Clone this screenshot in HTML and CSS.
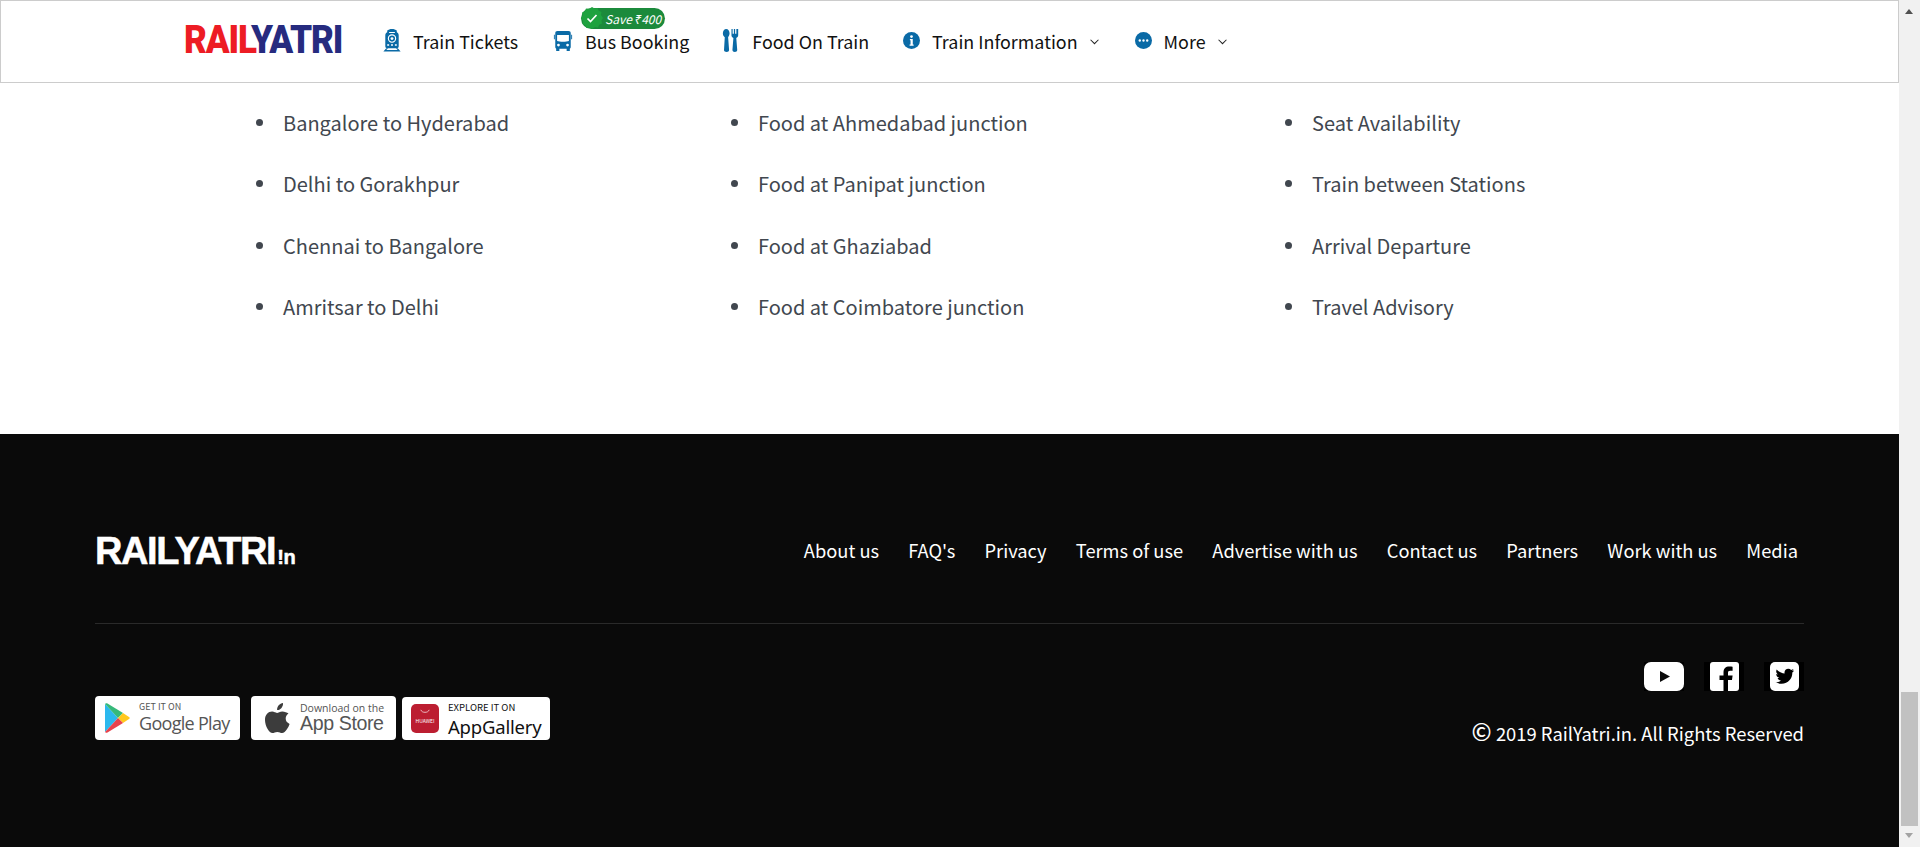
FILE: index.html
```html
<!DOCTYPE html>
<html>
<head>
<meta charset="UTF-8">
<title>RailYatri</title>
<link rel="stylesheet" href="styles.css">
</head>
<body>
<div class="page">
	<div class="content">
		<header class="topbar">
			<div class="brand"><div class="brand-text"><span class="rail">RAIL</span><span class="yatri">YATRI</span></div></div>
			<nav class="nav">
				<a class="nav-item item-train">
					<svg class="ic ic-train" viewBox="0 0 18 24"><path fill="#0a6aa6" d="M9 0c-2 0-4 .6-5 1.600v1.900C2.600 4 2 5.400 2 7v11c0 1.200.8 2 2 2h10c1.200 0 2-.8 2-2V7c0-1.600-.6-3-2-3.500V1.600C13 .6 11 0 9 0z"/><circle cx="9" cy="10" r="3.800" fill="none" stroke="#fff" stroke-width="1.200"/><circle cx="9" cy="10" r="1.500" fill="#fff"/><path fill="#fff" d="M6 3h6v1.200H6zM4 16h2v1.500H4zM8 16h2v1.500H8zM12 16h2v1.500h-2z"/><path fill="#0a6aa6" d="M0 23.500L3 20h2l-2 2h12l-2-2h2l3 3.500z"/></svg>
					Train Tickets
				</a>
				<a class="nav-item item-bus">
					<span class="save"><svg class="save-star" viewBox="0 0 22 22"><path fill="#1ea23f" d="M11 0l2.500 1.600L16.500 1l1.200 2.800 2.800 1.200-.6 3L22 11l-1.600 2.500.6 3-2.800 1.200-1.200 2.800-3-.6L11 22l-2.500-1.600-3 .6-1.200-2.800L1.500 17l.6-3L0 11l1.600-2.500-.6-3 2.800-1.200L5 1.500l3 .6z"/><path fill="none" stroke="#fff" stroke-width="1.700" d="M6.500 11.500l3 3 6-6.500"/></svg><i>Save ₹400</i></span>
					<svg class="ic ic-bus" viewBox="0 0 20 22"><path fill="#0a6aa6" d="M4 0h12c1.700 0 2.500 1 2.500 2.500V18c0 .8-.4 1.200-1 1.400V22h-3.500v-2.500H6V22H2.500v-2.600c-.6-.2-1-.6-1-1.400V2.500C1.500 1 2.300 0 4 0z"/><path fill="#fff" d="M3.500 4.500h13V11c-3 1-10 1-13 0z"/><circle cx="5" cy="15.500" r="1.500" fill="#fff"/><circle cx="15" cy="15.500" r="1.500" fill="#fff"/><path fill="#0a6aa6" d="M0 4h1v5H0zM19 4h1v5h-1z"/></svg>
					Bus Booking
				</a>
				<a class="nav-item item-food">
					<svg class="ic ic-food" viewBox="0 0 17 24"><path fill="#0a6aa6" d="M3.500 0C5.500 0 7 2 7 4.500 7 6.500 6 8 5.500 8.500L6.500 22c0 1.200-1 2-2.500 2S1 23.200 1.200 22L2 8.500C.9 8 0 6.500 0 4.500 0 2 1.500 0 3.500 0z"/><path fill="#0a6aa6" d="M9 0h1.200v5h1.300V0h1.300v5h1.300V0H16v6.500c0 1.500-1 2.500-2 2.800L15 22c0 1.200-1 2-2.500 2S10 23.200 10 22l1-12.700c-1.100-.3-2-1.300-2-2.800z"/></svg>
					Food On Train
				</a>
				<a class="nav-item item-info">
					<svg class="ic ic-round" viewBox="0 0 16 16"><circle cx="8" cy="8" r="8" fill="#0a6aa6"/><circle cx="8" cy="4.300" r="1.300" fill="#fff"/><path fill="#fff" d="M6.500 6.500h2.700v5.200h.8V13H6.200v-1.300h.9V7.800h-.6z"/></svg>
					Train Information
					<svg class="chev" viewBox="0 0 8 5"><path fill="none" stroke="#222" stroke-width=".9" d="M.5 .5L4 4l3.500-3.500"/></svg>
				</a>
				<a class="nav-item item-more">
					<svg class="ic ic-round" viewBox="0 0 16 16"><circle cx="8" cy="8" r="8" fill="#0a6aa6"/><circle cx="4.500" cy="8" r="1.100" fill="#fff"/><circle cx="8" cy="8" r="1.100" fill="#fff"/><circle cx="11.500" cy="8" r="1.100" fill="#fff"/></svg>
					More
					<svg class="chev" viewBox="0 0 8 5"><path fill="none" stroke="#222" stroke-width=".9" d="M.5 .5L4 4l3.500-3.500"/></svg>
				</a>
			</nav>
		</header>

		<section class="links">
			<ul class="col col-1">
				<li>Bangalore to Hyderabad</li>
				<li>Delhi to Gorakhpur</li>
				<li>Chennai to Bangalore</li>
				<li>Amritsar to Delhi</li>
			</ul>
			<ul class="col col-2">
				<li>Food at Ahmedabad junction</li>
				<li>Food at Panipat junction</li>
				<li>Food at Ghaziabad</li>
				<li>Food at Coimbatore junction</li>
			</ul>
			<ul class="col col-3">
				<li>Seat Availability</li>
				<li>Train between Stations</li>
				<li>Arrival Departure</li>
				<li>Travel Advisory</li>
			</ul>
		</section>

		<footer class="footer">
			<div class="foot-top">
				<div class="foot-logo">RAILYATRI<span class="dot-in">!n</span></div>
				<div class="foot-links">
					<a>About us</a>
					<a>FAQ's</a>
					<a>Privacy</a>
					<a>Terms of use</a>
					<a>Advertise with us</a>
					<a>Contact us</a>
					<a>Partners</a>
					<a>Work with us</a>
					<a>Media</a>
				</div>
			</div>
			<div class="foot-bottom">
				<div class="stores">
					<a class="store store-play">
						<svg class="play-ic" viewBox="0 0 25 30"><path fill="#2bb8ee" d="M0 1v28l13-14z"/><path fill="#36b97a" d="M0 1c.5-.8 1.500-1 2.500-.4L18 10l-5 5z"/><path fill="#ffc81e" d="M18 10l6 4c1 .6 1 1.400 0 2l-6 4-5-5z"/><path fill="#e8434d" d="M0 29c.5.800 1.500 1 2.500.4L18 20l-5-5z"/></svg>
						<span class="store-text"><small>GET IT ON</small><b>Google Play</b></span>
					</a>
					<a class="store store-apple">
						<svg class="apple-ic" viewBox="0 0 26 31"><path fill="#3c3c3c" d="M18 0c.2 2-.5 3.600-1.500 4.900-1.100 1.300-2.700 2.300-4.400 2.100-.2-1.800.6-3.500 1.600-4.700C14.800 1 16.500.1 18 0zM23.500 10.600c-1.800 1.200-2.800 2.900-2.800 5 0 2.400 1.300 4.200 3.900 5.300-.6 1.900-1.500 3.700-2.700 5.400-1.500 2.300-3 3.700-4.800 3.700-1.700 0-2.600-1.100-4.800-1.100-2.100 0-3.200 1.100-4.800 1.100-1.900 0-3.300-1.600-4.900-4C1.100 23.200 0 20 0 16.900c0-5.100 3.300-8.300 7.100-8.300 2 0 3.600 1.300 4.900 1.300 1.200 0 3-1.400 5.300-1.400 2.400 0 4.700 1 6.200 2.100z"/></svg>
						<span class="store-text"><small>Download on the</small><b>App Store</b></span>
					</a>
					<a class="store store-huawei">
						<span class="huawei-ic"><svg viewBox="0 0 12 5"><path fill="none" stroke="#fff" stroke-width=".8" d="M1 .5c1 4 9 4 10 0"/></svg><em>HUAWEI</em></span>
						<span class="store-text"><small>EXPLORE IT ON</small><b>AppGallery</b></span>
					</a>
				</div>
				<div class="foot-right">
					<div class="social">
						<span class="soc"><svg class="yt" viewBox="0 0 40 29"><rect width="40" height="29" rx="7" fill="#fff"/><path fill="#0a0a0a" d="M16 9l10 5.500L16 20z"/></svg></span>
						<span class="soc"><svg viewBox="0 0 29 29"><rect width="29" height="29" rx="3" fill="#fff"/><path fill="#000" d="M18 29V18h4l.6-4.500H18v-2.600c0-1.300.4-2.100 2.200-2.100h2.400v-4c-.4 0-1.800-.2-3.400-.2-3.400 0-5.700 2-5.700 5.800v3.100h-4V18h4v11z"/></svg></span>
						<span class="soc"><svg viewBox="0 0 29 29"><rect width="29" height="29" rx="5" fill="#fff"/><path fill="#000" d="M24 8.500c-.7.300-1.400.5-2.200.6.800-.5 1.400-1.200 1.700-2.100-.7.400-1.500.8-2.400.9-.7-.8-1.700-1.200-2.800-1.200-2.100 0-3.800 1.700-3.800 3.800 0 .3 0 .6.100.9-3.200-.2-6-1.700-7.900-4-.3.600-.5 1.200-.5 1.900 0 1.300.7 2.500 1.700 3.200-.6 0-1.200-.2-1.700-.5 0 1.900 1.300 3.400 3.100 3.800-.6.200-1.200.2-1.700.1.500 1.500 1.900 2.600 3.600 2.600-1.700 1.300-3.800 1.900-5.600 1.600 1.700 1.100 3.700 1.700 5.900 1.700 7 0 11-5.900 10.800-11.200.7-.5 1.300-1.200 1.700-2.100z"/></svg></span>
					</div>
					<div class="copy"><span class="copy-mark">©</span> 2019 RailYatri.in. All Rights Reserved</div>
				</div>
			</div>
		</footer>
	</div>
	<div class="scrollbar">
		<span class="arrow arrow-up"></span>
		<span class="thumb"></span>
		<span class="arrow arrow-down"></span>
	</div>
</div>
</body>
</html>
```
FILE: styles.css
```css
* {
	box-sizing: border-box;
}
html, body {
	margin: 0;
	height: 847px;
	overflow: hidden;
}
body {
	font-family: "Noto Sans CJK JP", "Noto Sans", sans-serif;
	background: #fff;
}
.page {
	display: flex;
	height: 847px;
}
.content {
	width: 1899px;
	display: flex;
	flex-direction: column;
}

/* header */
.topbar {
	height: 83px;
	border: 1px solid #ccc;
	display: flex;
	align-items: center;
	padding-left: 183px;
	background: #fff;
}
.brand {
	width: 199px;
	margin-top: -3px;
}
.brand-text {
	font-family: Roboto, "Liberation Sans", sans-serif;
	font-weight: 900;
	font-size: 38px;
	letter-spacing: -1.300px;
	line-height: 1;
	white-space: nowrap;
	transform: scaleX(.925);
	transform-origin: left center;
}
.rail {
	color: #ed1c24;
}
.yatri {
	color: #262b7f;
}
.nav {
	display: flex;
	align-items: center;
}
.nav-item {
	position: relative;
	display: flex;
	align-items: center;
	font-size: 17.900px;
	line-height: 24px;
	color: #111;
	white-space: nowrap;
	margin-top: -2px;
}
.ic {
	display: block;
	flex: none;
	margin-right: 12px;
}
.ic-train {
	width: 18px;
	height: 23px;
}
.ic-bus {
	width: 20px;
	height: 20px;
}
.ic-food {
	width: 18px;
	height: 23px;
}
.ic-round {
	width: 17px;
	height: 17px;
}
.item-bus {
	margin-left: 35px;
}
.item-food {
	margin-left: 33px;
}
.item-info {
	margin-left: 34px;
}
.item-more {
	margin-left: 36px;
}
.chev {
	width: 9px;
	height: 6px;
	margin-left: 12px;
	margin-top: 2px;
}
.save {
	position: absolute;
	left: 28px;
	top: -21px;
	width: 84px;
	height: 21px;
	border-radius: 11px;
	background: #1b8a3c;
	color: #fff;
	font-size: 12px;
	line-height: 21px;
	padding-left: 24px;
}
.save-star {
	position: absolute;
	left: 0;
	top: -1px;
	width: 22px;
	height: 22px;
}

/* link lists */
.links {
	height: 351px;
	display: flex;
	padding-top: 9px;
}
.col {
	list-style: none;
	margin: 0;
	padding: 0;
}
.col li {
	position: relative;
	height: 61.330px;
	line-height: 61px;
	font-size: 20px;
	color: #41474f;
	white-space: nowrap;
}
.col li::before {
	content: "";
	position: absolute;
	left: -27px;
	top: 27px;
	width: 7px;
	height: 7px;
	border-radius: 50%;
	background: #41474f;
}
.col-1 {
	margin-left: 283px;
	width: 475px;
}
.col-2 {
	width: 554px;
}

/* footer */
.footer {
	flex: 1;
	background: #0a0a0a;
	padding: 0 95px;
	color: #fff;
}
.foot-top {
	height: 190px;
	display: flex;
	justify-content: space-between;
	align-items: center;
	border-bottom: 1px solid #2a2a2a;
	padding: 36px 6px 0 0;
}
.foot-logo {
	font-family: "Liberation Sans", Arial, sans-serif;
	font-weight: bold;
	font-size: 38px;
	line-height: 1;
	letter-spacing: -1.400px;
	-webkit-text-stroke: .5px #fff;
	margin-top: 8px;
}
.dot-in {
	font-size: 20px;
	letter-spacing: -.5px;
	margin-left: 2px;
}
.foot-links {
	display: flex;
	gap: 29.200px;
	font-size: 18.300px;
	line-height: 24px;
	margin-top: 6px;
}
.foot-bottom {
	display: flex;
	justify-content: space-between;
	padding-top: 38px;
}
.stores {
	display: flex;
	align-items: flex-start;
	margin-top: 34px;
}
.store {
	display: flex;
	align-items: center;
	width: 145px;
	height: 44px;
	margin-right: 11px;
	padding-left: 10px;
	background: #fff;
	border-radius: 4px;
	color: #555;
}
.store-apple {
	margin-right: 6px;
	padding-left: 14px;
}
.store-huawei {
	width: 148px;
	height: 43px;
	margin-top: 1px;
	margin-right: 0;
	padding-left: 9px;
	color: #111;
}
.store-text {
	display: flex;
	flex-direction: column;
	white-space: nowrap;
}
.store-text small {
	font-size: 9px;
	line-height: 10px;
}
.store-text b {
	font-weight: normal;
	font-size: 18px;
	line-height: 22px;
	letter-spacing: -.7px;
	font-family: "Open Sans", sans-serif;
}
.play-ic {
	width: 25px;
	height: 30px;
	margin-right: 9px;
}
.apple-ic {
	width: 26px;
	height: 31px;
	margin-right: 9px;
}
.store-apple .store-text small {
	font-size: 10.500px;
	font-family: "Open Sans", sans-serif;
}
.store-apple .store-text b {
	font-size: 19.600px;
	line-height: 20px;
	font-family: "Liberation Sans", sans-serif;
	letter-spacing: -.4px;
}
.store-huawei .store-text small {
	font-size: 9.500px;
	line-height: 14px;
	padding-top: 1px;
}
.store-huawei .store-text b {
	font-family: "Noto Sans", sans-serif;
	font-size: 18.500px;
	line-height: 25px;
	letter-spacing: -.2px;
}
.huawei-ic {
	display: block;
	width: 28px;
	height: 29px;
	margin-right: 9px;
	border-radius: 5px;
	background: #bc1e31;
	color: #fff;
	text-align: center;
}
.huawei-ic svg {
	display: block;
	width: 10px;
	height: 5px;
	margin: 5px auto 4px;
}
.huawei-ic em {
	display: block;
	font-style: normal;
	font-size: 5px;
	line-height: 6px;
}
.foot-right {
	display: flex;
	flex-direction: column;
	align-items: flex-end;
}
.social {
	display: flex;
	gap: 20px;
	height: 29px;
}
.soc {
	display: flex;
	justify-content: center;
	width: 40px;
	height: 29px;
	background: #000;
}
.soc svg {
	display: block;
	width: 29px;
	height: 29px;
}
.soc svg.yt {
	width: 40px;
}
.copy {
	margin-top: 29px;
	font-size: 18.400px;
	line-height: 26px;
}
.copy-mark {
	font-size: 24px;
	line-height: 20px;
	font-weight: 500;
}

/* scrollbar */
.scrollbar {
	position: relative;
	width: 21px;
	height: 847px;
	background: #f1f1f1;
}
.thumb {
	position: absolute;
	left: 2px;
	top: 692px;
	width: 17px;
	height: 134px;
	background: #c1c1c1;
}
.arrow {
	position: absolute;
	left: 6px;
	border-left: 4.500px solid transparent;
	border-right: 4.500px solid transparent;
}
.arrow-up {
	top: 9px;
	border-bottom: 5px solid #505050;
}
.arrow-down {
	top: 833px;
	border-top: 5px solid #a3a3a3;
}
```
